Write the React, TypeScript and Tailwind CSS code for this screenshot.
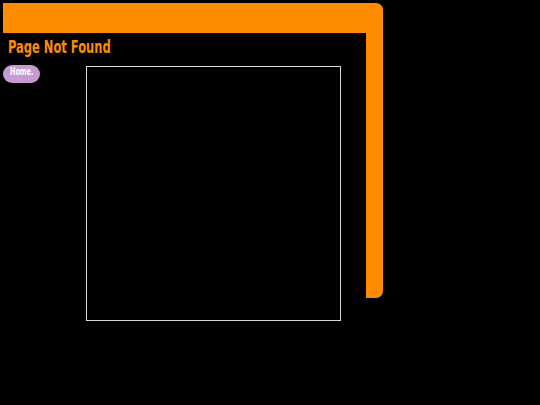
export default function App() {
  return (
    <div className="min-h-[405px] w-[540px] bg-black" style={{ fontFamily: '"DejaVu Sans Condensed", "DejaVu Sans", sans-serif' }}>
      <div className="pl-[3px] pt-[3px]">
        <div className="h-[295px] w-[380px] rounded-r-[7px] border-t-[30px] border-r-[17px] border-[#ff8c00]">
          <h1 className="origin-left scale-x-[0.71] pl-[7px] pt-[4px] text-[18px] font-bold leading-[20px] text-[#ff8c00]">
            Page Not Found
          </h1>
          <div className="mt-[9px] flex items-start">
            <a
              href="#"
              className="-mt-px block h-[18px] w-[37px] rounded-full bg-[#c79ad2] pl-[7px] pt-[2px] text-[10px] leading-[10px] text-white"
            >
              <span className="inline-block origin-left scale-x-[0.72] font-bold">Home.</span>
            </a>
            <div className="ml-[46px] h-[255px] w-[255px] border border-[#d9d9d9]" />
          </div>
        </div>
      </div>
    </div>
  );
}
